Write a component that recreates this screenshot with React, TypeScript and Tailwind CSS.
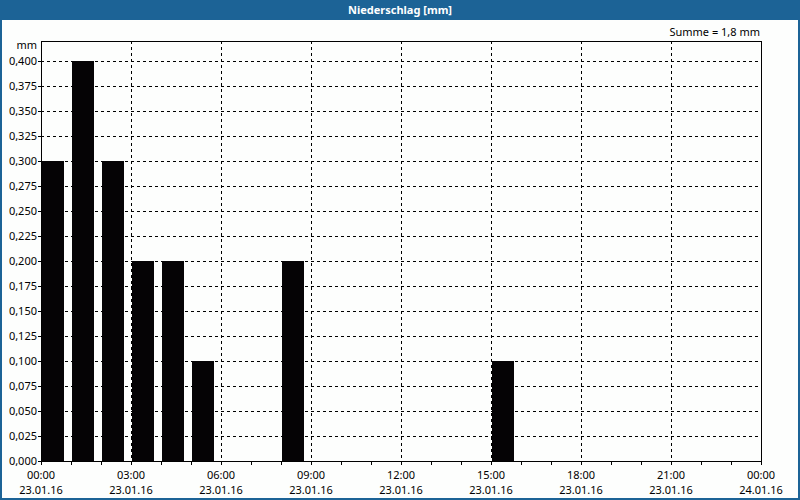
export default function App() {
  const ox = 2, oy = 20;
  const X = (h: number) => 41 + 30 * h - ox;
  const Y = (v: number) => 461 - v * 1000 - oy;
  const bars: [number, number][] = [[0,.3],[1,.4],[2,.3],[3,.2],[4,.2],[5,.1],[8,.2],[15,.1]];
  const ys = Array.from({ length: 17 }, (_, i) => i * 0.025);
  const xs = [0,3,6,9,12,15,18,21,24];
  return (
    <div className="w-[800px] h-[500px] flex flex-col bg-[#1c6396] font-['Liberation_Sans',Arial,sans-serif]">
      <div className="h-[20px] flex items-center justify-center text-white text-[11px] font-bold">Niederschlag [mm]</div>
      <div className="flex-1 mx-[2px] mb-[2px] bg-[#fdfefd]">
        <svg width={796} height={478} className="text-[11px]">
          {ys.slice(1).map(v => (
            <line key={v} x1={X(0)} x2={X(24)} y1={Y(v)+0.5} y2={Y(v)+0.5} stroke="#000" strokeDasharray="3 3" />
          ))}
          {xs.slice(1, -1).map(h => (
            <line key={h} x1={X(h)+0.5} x2={X(h)+0.5} y1={Y(0.42)} y2={Y(0)} stroke="#000" strokeDasharray="3 3" />
          ))}
          {bars.map(([h, v]) => (
            <rect key={h} x={X(h)+1} y={Y(v)} width={22} height={v*1000} fill="#050305" />
          ))}
          <rect x={X(0)+0.5} y={Y(0.42)+0.5} width={720} height={420} fill="none" stroke="#000" />
          {Array.from({ length: 25 }, (_, h) => (
            <line key={h} x1={X(h)+0.5} x2={X(h)+0.5} y1={Y(0)} y2={Y(0)+4} stroke="#000" />
          ))}
          {ys.map(v => (
            <line key={v} x1={X(0)-3} x2={X(0)} y1={Y(v)+0.5} y2={Y(v)+0.5} stroke="#000" />
          ))}
          {ys.map(v => (
            <text key={v} x={X(0)-4} y={Y(v)+4} textAnchor="end" fill="#000">{v.toFixed(3).replace('.', ',')}</text>
          ))}
          <text x={X(0)-4} y={Y(0.42)+8} textAnchor="end">mm</text>
          <text x={760-ox} y={36-oy} textAnchor="end">Summe = 1,8 mm</text>
          {xs.map(h => (
            <g key={h}>
              <text x={X(h)} y={479-oy} textAnchor="middle">{String(h % 24).padStart(2, '0')}:00</text>
              <text x={X(h)} y={494-oy} textAnchor="middle">{h === 24 ? '24.01.16' : '23.01.16'}</text>
            </g>
          ))}
        </svg>
      </div>
    </div>
  );
}
